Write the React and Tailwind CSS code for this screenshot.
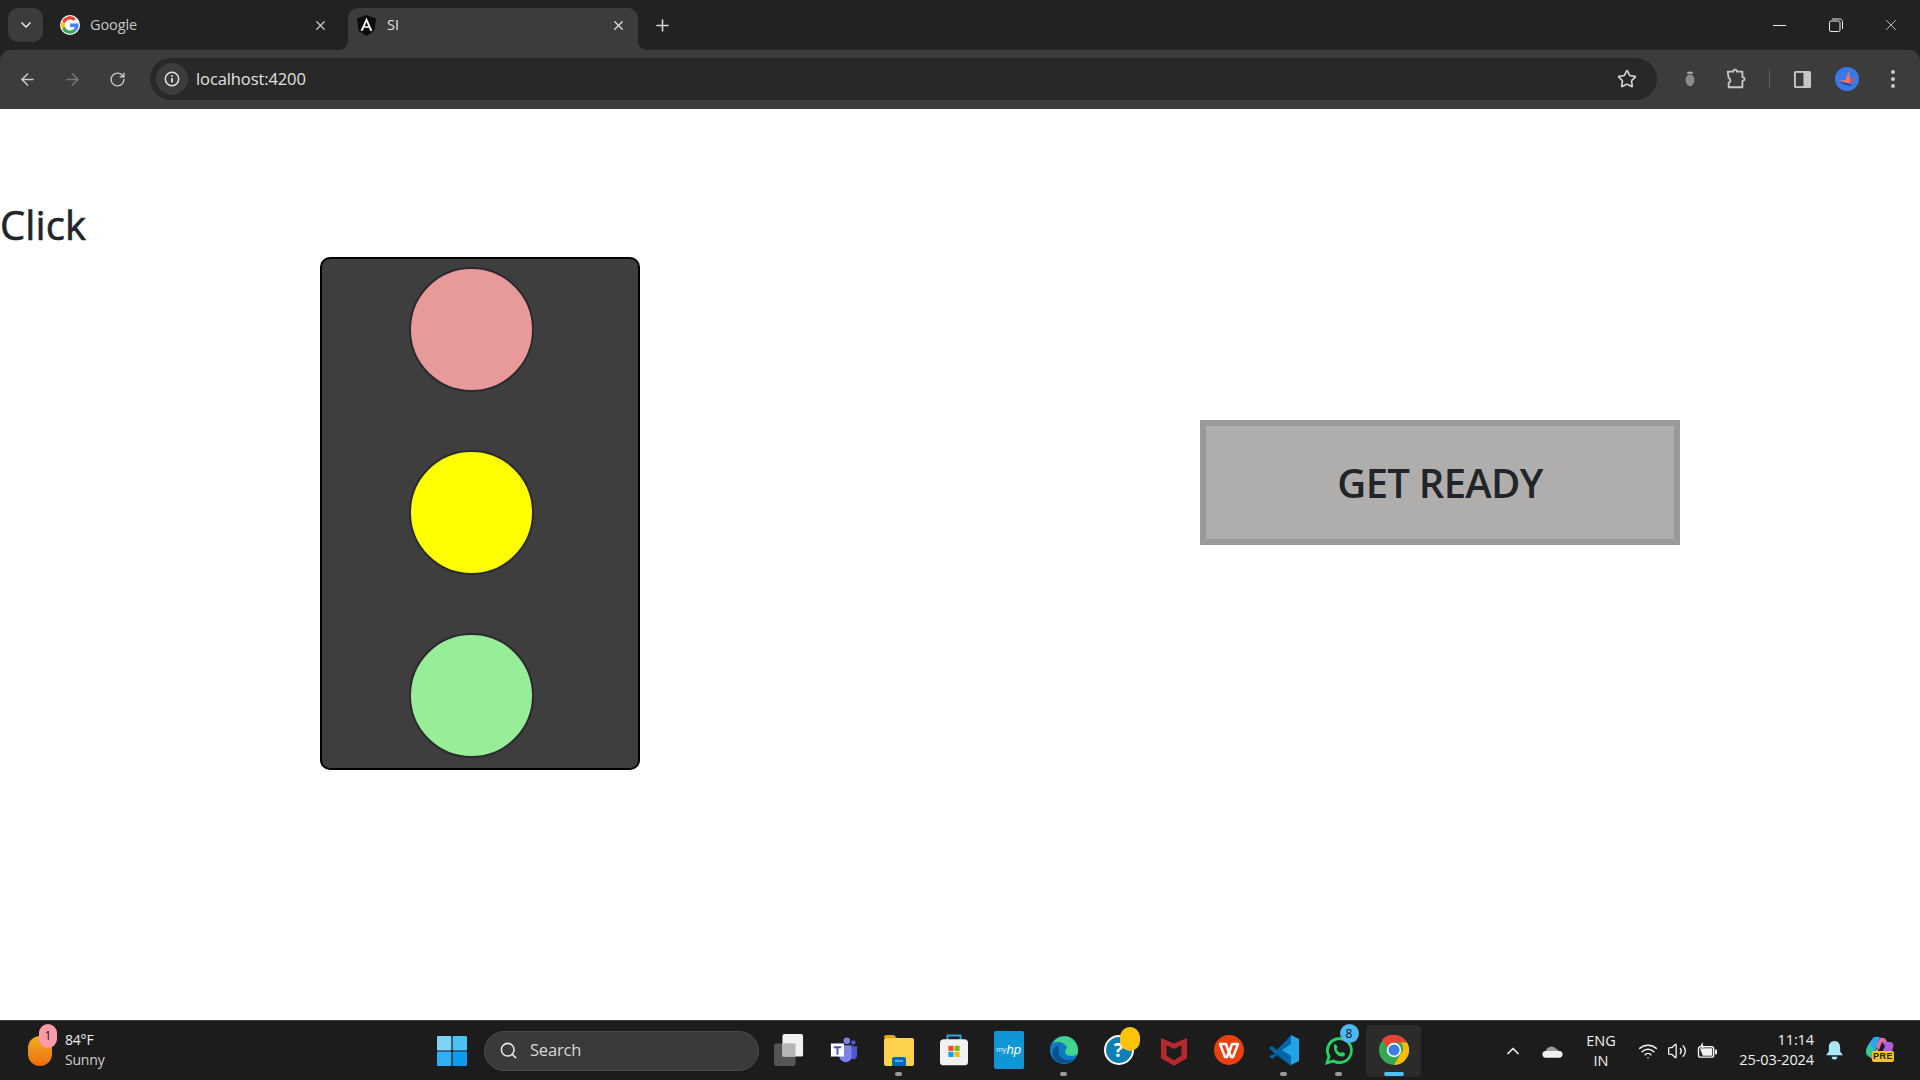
import { ArrowLeft, ArrowRight, ChevronDown, ChevronUp, Plus, RotateCw, Search, Star, Volume2, Wifi, X } from "lucide-react";

const uiFont = "font-['Open_Sans','Noto_Sans',sans-serif]";

function GoogleIcon() {
  return (
    <svg viewBox="0 0 48 48" className="w-5 h-5 rounded-full bg-white p-[1px]">
      <path fill="#EA4335" d="M24 9.500c3.500 0 6.700 1.300 9.200 3.600l6.800-6.800C35.900 2.400 30.400 0 24 0 14.600 0 6.500 5.400 2.600 13.200l7.900 6.200C12.400 13.600 17.700 9.500 24 9.500z" />
      <path fill="#4285F4" d="M46.900 24.500c0-1.600-.1-3.100-.4-4.500H24v9h12.900c-.6 3-2.200 5.500-4.800 7.200l7.700 6c4.500-4.200 7.100-10.300 7.100-17.700z" />
      <path fill="#FBBC05" d="M10.500 28.600c-.5-1.500-.8-3-.8-4.600s.3-3.100.8-4.600l-7.900-6.200C.9 16.500 0 20.100 0 24s.9 7.500 2.600 10.800l7.900-6.200z" />
      <path fill="#34A853" d="M24 48c6.500 0 11.900-2.100 15.800-5.800l-7.700-6c-2.100 1.400-4.900 2.300-8.100 2.300-6.300 0-11.600-4.200-13.500-9.900l-7.900 6.200C6.500 42.600 14.600 48 24 48z" />
    </svg>
  );
}

function AngularIcon() {
  return (
    <svg viewBox="0 0 20 22" className="w-[19px] h-[21px]">
      <path fill="#0c0c10" d="M10 0 0 3.500 1.600 16.500 10 22l8.400-5.500L20 3.500z" />
      <path fill="#fff" d="M10 2.500 3.800 16.500h2.400l1.200-3.100h5.200l1.200 3.100h2.400zm0 4.900 1.900 4.300H8.100z" />
    </svg>
  );
}

function BugIcon() {
  return (
    <svg viewBox="0 0 20 24" className="w-[16px] h-[20px]">
      <path fill="#b0b0b0" d="M6 5.500C6 3.500 8 2.500 10 2.500s4 1 4 3z" />
      <path fill="#8a8a8a" d="M4.500 13c0-4 2.500-6.500 5.500-6.500s5.500 2.500 5.500 6.500-2.500 8-5.500 8-5.500-4-5.500-8z" />
    </svg>
  );
}

function PuzzleIcon() {
  return (
    <svg viewBox="0 0 24 24" className="w-[22px] h-[22px]" fill="none" stroke="#c7c7c7" strokeWidth="2" strokeLinejoin="round">
      <path d="M3 4h6c0-3 4-3 4 0h6v6c3 0 3 4 0 4v7H4v-5c2.500-.5 2.500-4.500 0-5z" />
    </svg>
  );
}

function SidePanelIcon() {
  return (
    <svg viewBox="0 0 20 20" className="w-[19px] h-[19px]">
      <rect x="1" y="1" width="18" height="18" rx="2" fill="#c7c7c7" />
      <rect x="3" y="3" width="8" height="14" fill="#3c3c3c" />
    </svg>
  );
}

function Avatar() {
  return (
    <svg viewBox="0 0 24 24" className="w-6 h-6">
      <circle cx="12" cy="12" r="12" fill="#3b78e7" />
      <path fill="#f0736f" d="M14 3.500 15.500 17 3.500 13.500l7-.5z" />
      <path fill="#d9534f" d="M15.500 17 20 12l-5-1z" />
      <path fill="#24418f" d="M4 14.500 15 17l2 2-8-1.500z" />
    </svg>
  );
}

function WindowsLogo() {
  return (
    <svg viewBox="0 0 30 30" className="w-[30px] h-[30px]">
      <rect x="0" y="0" width="14.400" height="14.400" rx="1" fill="#7fd4f5" />
      <rect x="15.600" y="0" width="14.400" height="14.400" rx="1" fill="#4cc2f1" />
      <rect x="0" y="15.600" width="14.400" height="14.400" rx="1" fill="#2fb0f2" />
      <rect x="15.600" y="15.600" width="14.400" height="14.400" rx="1" fill="#0f9bf0" />
    </svg>
  );
}

function TaskView() {
  return (
    <svg viewBox="0 0 32 36" className="w-[30px] h-[34px]">
      <rect x="0" y="11" width="23" height="24" rx="3" fill="#555" />
      <rect x="9" y="1" width="22" height="24" rx="2" fill="#f2f2f2" />
      <rect x="9" y="11" width="14" height="14" fill="#b5b5b5" />
    </svg>
  );
}

function TeamsIcon() {
  return (
    <svg viewBox="0 0 30 30" className="w-[28px] h-[28px]">
      <circle cx="18" cy="5" r="3.500" fill="#7b83eb" />
      <circle cx="25" cy="7" r="2.500" fill="#5059c9" />
      <path fill="#5059c9" d="M21 11h8v9c0 3-2 5-4 5s-4-2-4-5z" />
      <path fill="#7b83eb" d="M10 10h13v12c0 4-3 6-6.500 6S10 25 10 22z" />
      <rect x="1" y="8" width="14" height="14" fill="#fff" />
      <path fill="#4b53bc" d="M4 11h8v2H9v7H7v-7H4z" />
    </svg>
  );
}

function ExplorerIcon() {
  return (
    <svg viewBox="0 0 30 34" className="w-[30px] h-[34px]">
      <path fill="#e0a012" d="M0 4c0-1 1-2 2-2h8l3 3h-13z" />
      <rect x="0" y="5" width="30" height="28" rx="2" fill="#fcd34d" />
      <path fill="#0369b8" d="M8 26c0-1 1-2 2-2h10c1 0 2 1 2 2v7H8z" />
      <rect x="11" y="27" width="8" height="2" fill="#39b4f0" />
    </svg>
  );
}

function StoreIcon() {
  return (
    <svg viewBox="0 0 30 34" className="w-[28px] h-[33px]">
      <path fill="none" stroke="#28a8e0" strokeWidth="2" d="M8 8V2h14v6" />
      <rect x="0" y="6" width="30" height="28" rx="4" fill="#f2f2f2" />
      <rect x="9" y="13" width="5.500" height="5.500" fill="#f25022" />
      <rect x="15.500" y="13" width="5.500" height="5.500" fill="#7fba00" />
      <rect x="9" y="19.500" width="5.500" height="5.500" fill="#00a4ef" />
      <rect x="15.500" y="19.500" width="5.500" height="5.500" fill="#ffb900" />
    </svg>
  );
}

function EdgeIcon() {
  return (
    <svg viewBox="0 0 32 32" className="w-[30px] h-[30px]">
      <circle cx="16" cy="16" r="15" fill="#0f7ac4" />
      <path fill="#42d48b" d="M4 9C8 1 20-2 27 6c4 5 5 11 3 15-4 2-12 2-13-3 0-2 2-3 2-5-1-4-9-8-15-4z" />
      <path fill="#0b4f8c" d="M10 17c0 8 8 12 16 8-6 8-18 6-21-1-3-6 1-13 6-13-1 2-1 4-1 6z" />
    </svg>
  );
}

function HelpIcon() {
  return (
    <div className="relative w-[30px] h-[30px] rounded-full bg-[#0e7fb5] border-2 border-white flex items-center justify-center">
      <span className={`${uiFont} text-white text-[20px] font-bold leading-none`}>?</span>
      <span className="absolute -top-[10px] left-[14px] w-[20px] h-[24px] rounded-full bg-[#fdc20a]" />
    </div>
  );
}

function McafeeIcon() {
  return (
    <svg viewBox="0 0 28 34" className="w-[26px] h-[32px]">
      <path fill="#b5282c" d="M0 4 14 10 28 4v22L14 34 0 26zM6 12v11l8 5 8-5V12l-8 4z" />
    </svg>
  );
}

function WpsIcon() {
  return (
    <svg viewBox="0 0 30 30" className="w-[30px] h-[30px]">
      <circle cx="15" cy="15" r="15" fill="#e8400f" />
      <path fill="none" stroke="#fff" strokeWidth="2.500" strokeLinejoin="round" d="M6 9h6l3 9 3-9h6l-5 13h-2l-2-6-2 6h-2z" />
    </svg>
  );
}

function VscodeIcon() {
  return (
    <svg viewBox="0 0 30 32" className="w-[30px] h-[32px]">
      <path fill="#0065a9" d="M22 1 8 16l-5-4-3 2 6 6-6 2 3 3 5-4 14 11z" />
      <path fill="#23a3e8" d="M22 1l8 4v22l-8 4V22L13 16l9-6z" />
    </svg>
  );
}

function WhatsappIcon() {
  return (
    <div className="relative w-[30px] h-[32px]">
      <svg viewBox="0 0 30 30" className="w-[30px] h-[30px] mt-[2px]">
        <path fill="none" stroke="#25d366" strokeWidth="2.800" d="M3 27l2-6.500A12 12 0 1 1 9.500 25z" />
        <path fill="#25d366" d="M10 9c1-1 2-1 2.500 0l1 2.500-1 1.500c1 2 2 3 4 4l1.500-1 2.500 1c1 1 0 3-1.500 3.500-5 1-10-5-9-11.500z" />
      </svg>
      <span className={`${uiFont} absolute -top-[10px] left-[16px] w-[19px] h-[19px] rounded-full bg-[#4cb9f0] text-[#111] text-[12px] leading-[19px] text-center`}>8</span>
    </div>
  );
}

function ChromeIcon() {
  return (
    <svg viewBox="0 0 30 30" className="w-[30px] h-[30px]">
      <circle cx="15" cy="15" r="15" fill="#34a853" />
      <path fill="#ea4335" d="M15 0a15 15 0 0 1 13 7.500H15a7.500 7.500 0 0 0-7 5L3 4.500A15 15 0 0 1 15 0z" />
      <path fill="#fbbc05" d="M28 7.500A15 15 0 0 1 15 30l6.500-11a7.500 7.500 0 0 0 0-11.500z" />
      <circle cx="15" cy="15" r="7.200" fill="#fff" />
      <circle cx="15" cy="15" r="5.600" fill="#3b7de9" />
    </svg>
  );
}

function MyHp() {
  return (
    <div className="w-[30px] h-[38px] bg-[#0f96d6] rounded-[2px] flex items-center justify-center">
      <span className="font-['Liberation_Sans',sans-serif] text-[#cfeefa] text-[8px] leading-none">my</span>
      <span className="font-['Liberation_Sans',sans-serif] text-white text-[13px] italic leading-none">hp</span>
    </div>
  );
}

function OneDrive() {
  return (
    <svg viewBox="0 0 22 14" className="w-[21px] h-[14px]">
      <path fill="#9a9a9a" d="M4 8a6 6 0 0 1 11-3 4 4 0 0 1 3 3z" />
      <path fill="#f0f0f0" d="M4 14a3.500 3.500 0 0 1 0-7h14a3.500 3.500 0 0 1 0 7z" />
    </svg>
  );
}

function BatteryIcon() {
  return (
    <svg viewBox="0 0 22 18" className="w-[21px] h-[17px]" fill="none" stroke="#f2f2f2" strokeWidth="1.500">
      <rect x="1.500" y="5" width="16" height="11" rx="2" />
      <path fill="#f2f2f2" stroke="none" d="M3 6.500h13v8H6zM19 8h2v5h-2zM6 0 3 5h2.500L5 8l3-4H6z" />
    </svg>
  );
}

function BellIcon() {
  return (
    <svg viewBox="0 0 18 20" className="w-[17px] h-[19px]">
      <path fill="#a8e8f8" d="M9 0c4 0 6 3 6 7v4l3 4H0l3-4V7c0-4 2-7 6-7zM6 16.500h6c0 4-6 4-6 0z" />
    </svg>
  );
}

function CopilotIcon() {
  return (
    <div className="relative w-[30px] h-[30px]">
      <svg viewBox="0 0 30 24" className="w-[30px] h-[24px]">
        <path fill="#29a8e8" d="M8 2c2-2 5-1 7-1l-6 18c-2 2-7 1-8-3 0-5 4-10 7-14z" />
        <path fill="#35c98f" d="M1 16c0-3 2-6 4-8l5 8-2 5c-3 1-7-1-7-5z" />
        <path fill="#f9c22e" d="M5 21c3 1 4-1 5-4l2-5 3 8c0 2-2 3-4 3H7z" />
        <path fill="#b05fd8" d="M17 6h8c3 0 4 3 3 6l-3 8c-1 2-3 3-5 3h-6l6-13z" />
        <path fill="#e86ca8" d="M15 2c3-1 6 0 7 4h-5l-3 8-3-3z" />
      </svg>
      <span className="absolute left-[7px] top-[15px] w-[22px] h-[11px] rounded-[2px] bg-[#f5c518] font-['Liberation_Sans',sans-serif] text-[#222] text-[9px] font-bold leading-[11px] text-center tracking-[0.5px]">PRE</span>
    </div>
  );
}

function TabBar() {
  return (
    <div className="h-[50px] bg-[#212323] flex items-end pl-[8px] shrink-0">
      <div className="w-[35px] h-[34px] mb-[8px] rounded-[10px] bg-[#3c3c3c] flex items-center justify-center">
        <ChevronDown size={16} strokeWidth={2.5} color="#e3e3e3" />
      </div>
      <div className="w-[288px] h-[42px] ml-[8px] pb-[8px] pr-[11px] flex items-center">
        <div className="ml-[9px] mr-[10px]"><GoogleIcon /></div>
        <span className={`${uiFont} flex-1 text-[14.500px] text-[#c7c7c7] tracking-[-0.1px]`}>Google</span>
        <X size={15} strokeWidth={2} color="#c7c7c7" />
      </div>
      <div className="relative w-[290px] h-[42px] ml-[9px] pb-[8px] pl-[9px] pr-[12px] bg-[#3c3c3c] rounded-t-[10px] flex items-center">
        {/* flares where the active tab meets the toolbar */}
        <svg viewBox="0 0 10 10" className="absolute bottom-0 -left-[10px] w-[10px] h-[10px]">
          <path fill="#3c3c3c" d="M10 0v10H0c6 0 10-4 10-10z" />
        </svg>
        <svg viewBox="0 0 10 10" className="absolute bottom-0 -right-[10px] w-[10px] h-[10px]">
          <path fill="#3c3c3c" d="M0 0v10h10C4 10 0 6 0 0z" />
        </svg>
        <div className="mr-[11px]"><AngularIcon /></div>
        <span className={`${uiFont} flex-1 text-[14.500px] text-[#e3e3e3]`}>SI</span>
        <X size={15} strokeWidth={2} color="#e3e3e3" />
      </div>
      <div className="w-[49px] h-[42px] pb-[8px] flex items-center justify-center">
        <Plus size={19} strokeWidth={2} color="#d8d8d8" />
      </div>
      <div className="flex-1" />
      <div className="flex h-[50px] items-center text-[#e8e8e8]">
        <div className="w-[55px] mr-[1px] flex justify-center">
          <div className="w-[13px] h-px bg-[#e8e8e8]" />
        </div>
        <div className="w-[55px] flex justify-center">
          <svg viewBox="0 0 14 14" className="w-[14px] h-[14px]" fill="none" stroke="#e8e8e8">
            <rect x="0.500" y="3" width="10.500" height="10.500" rx="1.500" />
            <path d="M3 1h8c1.200 0 2.500 1.300 2.500 2.500V11" />
          </svg>
        </div>
        <div className="w-[55px] mr-[2px] flex justify-center">
          <X size={18} strokeWidth={1} color="#f0f0f0" />
        </div>
      </div>
    </div>
  );
}

function Toolbar() {
  return (
    <div className="h-[59px] bg-[#212323] shrink-0">
      <div className="h-[59px] bg-[#3c3c3c] rounded-t-[10px] flex items-center pl-[18px] pr-[20px] pb-[1px]">
        <ArrowLeft size={19} strokeWidth={2} color="#c7c7c7" />
        <ArrowRight size={19} strokeWidth={2} color="#777777" className="ml-[26px]" />
        <RotateCw size={17} strokeWidth={2} color="#c7c7c7" className="ml-[27px]" />
        <div className="w-[1507px] h-[42px] ml-[24px] rounded-full bg-[#282828] flex items-center pl-[6px] pr-[20px]">
          <div className="w-[32px] h-[32px] rounded-full bg-[#3c3c3c] flex items-center justify-center">
            <svg viewBox="0 0 16 16" className="w-[16px] h-[16px]" fill="none" stroke="#e3e3e3" strokeWidth="1.500">
              <circle cx="8" cy="8" r="6.700" />
              <path d="M8 7v4.500M8 4.200v1.600" strokeWidth="1.800" />
            </svg>
          </div>
          <span className={`${uiFont} ml-[8px] flex-1 text-[16.500px] text-[#e3e3e3] tracking-[-0.1px]`}>localhost:4200</span>
          <Star size={20} strokeWidth={2} color="#d0d0d0" />
        </div>
        <div className="ml-[25px]"><BugIcon /></div>
        <div className="ml-[27px]"><PuzzleIcon /></div>
        <div className="ml-[22px] w-px h-[20px] bg-[#5f5f5f]" />
        <div className="ml-[23px]"><SidePanelIcon /></div>
        <div className="ml-[23px]"><Avatar /></div>
        <div className="ml-[32px] flex flex-col gap-[3px]">
          <span className="w-[4px] h-[4px] rounded-full bg-[#c7c7c7]" />
          <span className="w-[4px] h-[4px] rounded-full bg-[#c7c7c7]" />
          <span className="w-[4px] h-[4px] rounded-full bg-[#c7c7c7]" />
        </div>
      </div>
    </div>
  );
}

function Page() {
  return (
    <main className={`${uiFont} flex-1 bg-white pt-[92px] text-[#212529]`}>
      <h1 className="text-[40px] leading-[48px] mb-[8px] tracking-[0.1px] [-webkit-text-stroke:0.6px_#212529]">Click</h1>
      <div className="flex items-start">
        <div className="ml-[320px] w-[320px] h-[513px] bg-[#3e3e3e] border-2 border-black rounded-[10px] pl-[87px] pt-[8px] flex flex-col gap-[58px]">
          <div className="w-[125px] h-[125px] rounded-full bg-[#e89a9a] border-2 border-[#2a2a30]" />
          <div className="w-[125px] h-[125px] rounded-full bg-[#ffff00] border-2 border-[#2a2a30]" />
          <div className="w-[125px] h-[125px] rounded-full bg-[#98ee98] border-2 border-[#2a2a30]" />
        </div>
        <div className="ml-[560px] mt-[163px] w-[480px] h-[125px] bg-[#b0aeac] border-[6px] border-[#9b9a99] flex items-center justify-center">
          <span className="text-[40px] font-semibold tracking-[-0.7px]">GET READY</span>
        </div>
      </div>
    </main>
  );
}

function AppIcon({ children, dot, active }) {
  return (
    <div className={`relative w-[55px] h-[52px] pb-[2px] flex items-center justify-center rounded-[4px] ${active ? "bg-[#2b2b2b]" : ""}`}>
      {children}
      {dot && <span className="absolute bottom-[1px] left-[24px] w-[7px] h-[4px] rounded-full bg-[#9a9a9a]" />}
      {active && <span className="absolute bottom-[1px] left-[18px] w-[20px] h-[4px] rounded-full bg-[#4cc2ff]" />}
    </div>
  );
}

function Taskbar() {
  return (
    <div className={`${uiFont} h-[60px] bg-[#1c1c1c] border-t border-[#3a3a3a] flex items-center text-[#f0f0f0] shrink-0`}>
      {/* Weather */}
      <div className="relative ml-[28px] w-[24px] h-[30px] rounded-full bg-gradient-to-b from-[#f0b020] to-[#ee6a10]">
        <span className="absolute -top-[12px] left-[11px] w-[18px] h-[24px] rounded-full bg-[#ff9aa8] text-[#222] text-[12px] leading-[24px] text-center">1</span>
      </div>
      <div className="ml-[13px] w-[60px] pb-[2px] text-[14px] leading-[20px] tracking-[-0.2px]">
        <div>84°F</div>
        <div className="text-[#d0d0d0]">Sunny</div>
      </div>

      {/* Start and pinned apps */}
      <div className="ml-[312px]"><WindowsLogo /></div>
      <div className="ml-[17px] w-[275px] h-[40px] rounded-full bg-[#3a3a3a] border border-[#4a4a4a] flex items-center pl-[14px]">
        <Search size={19} strokeWidth={2} color="#e8e8e8" />
        <span className="ml-[12px] text-[16.500px] text-[#d8d8d8] tracking-[-0.2px]">Search</span>
      </div>
      <div className="ml-[2px] flex items-center">
        <AppIcon><TaskView /></AppIcon>
        <AppIcon><TeamsIcon /></AppIcon>
        <AppIcon dot><ExplorerIcon /></AppIcon>
        <AppIcon><StoreIcon /></AppIcon>
        <AppIcon><MyHp /></AppIcon>
        <AppIcon dot><EdgeIcon /></AppIcon>
        <AppIcon><HelpIcon /></AppIcon>
        <AppIcon><McafeeIcon /></AppIcon>
        <AppIcon><WpsIcon /></AppIcon>
        <AppIcon dot><VscodeIcon /></AppIcon>
        <AppIcon dot><WhatsappIcon /></AppIcon>
        <AppIcon active><ChromeIcon /></AppIcon>
      </div>

      {/* System tray */}
      <div className="flex-1" />
      <ChevronUp size={20} strokeWidth={2} color="#f0f0f0" />
      <div className="ml-[19px]"><OneDrive /></div>
      <div className="ml-[15px] w-[46px] text-center text-[14.500px] leading-[20px]">
        <div>ENG</div>
        <div>IN</div>
      </div>
      <Wifi size={20} strokeWidth={1.8} color="#f0f0f0" className="ml-[14px]" />
      <Volume2 size={20} strokeWidth={1.6} color="#f0f0f0" className="ml-[9px]" />
      <div className="ml-[10px]"><BatteryIcon /></div>
      <div className="ml-[16px] w-[80px] pb-[2px] text-right text-[14.500px] leading-[20px] tracking-[-0.1px]">
        <div>11:14</div>
        <div>25-03-2024</div>
      </div>
      <div className="ml-[12px]"><BellIcon /></div>
      <div className="ml-[22px] mr-[25px]"><CopilotIcon /></div>
    </div>
  );
}

export default function App() {
  return (
    <div className="w-[1920px] h-[1080px] flex flex-col overflow-hidden">
      <TabBar />
      <Toolbar />
      <Page />
      <Taskbar />
    </div>
  );
}
